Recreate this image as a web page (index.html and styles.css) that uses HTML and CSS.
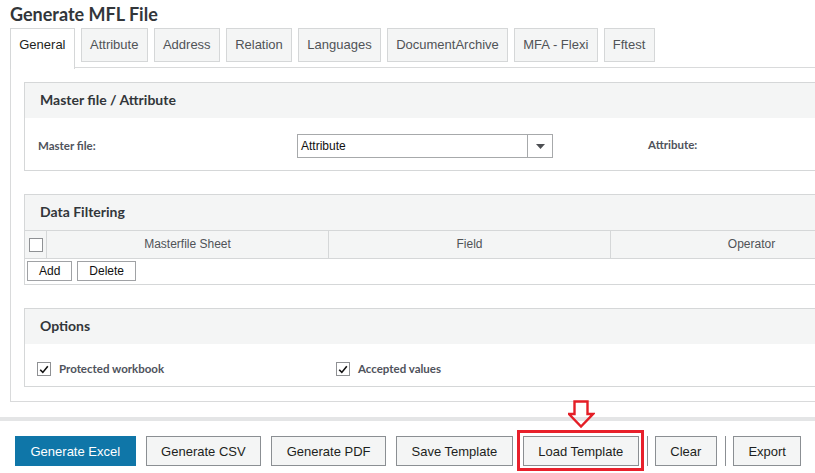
FILE: index.html
```html
<!DOCTYPE html>
<html>
<head>
<meta charset="utf-8">
<title>Generate MFL File</title>
<link rel="stylesheet" href="styles.css">
</head>
<body>
<div class="main">
  <h1 class="title">Generate MFL File</h1>
  <div class="tabs">
    <div class="tab tab-active">General</div>
    <div class="tab">Attribute</div>
    <div class="tab">Address</div>
    <div class="tab">Relation</div>
    <div class="tab">Languages</div>
    <div class="tab">DocumentArchive</div>
    <div class="tab">MFA - Flexi</div>
    <div class="tab">Fftest</div>
  </div>
  <div class="panel">
    <section class="box">
      <div class="box-head">Master file / Attribute</div>
      <div class="box-body master-row">
        <span class="lbl lbl-master">Master file:</span>
        <div class="select">
          <span class="select-val">Attribute</span>
          <span class="select-btn"><svg width="9" height="5" viewBox="0 0 9 5"><polygon points="0,0 9,0 4.5,5" fill="#4d4f53"/></svg></span>
        </div>
        <span class="lbl lbl-attr">Attribute:</span>
      </div>
    </section>

    <section class="box">
      <div class="box-head">Data Filtering</div>
      <div class="grid-head">
        <div class="cell-check"><span class="checkbox"></span></div>
        <div class="col">Masterfile Sheet</div>
        <div class="col">Field</div>
        <div class="col">Operator</div>
      </div>
      <div class="grid-tools">
        <button class="small-btn">Add</button>
        <button class="small-btn">Delete</button>
      </div>
    </section>

    <section class="box">
      <div class="box-head">Options</div>
      <div class="box-body options-row">
        <label class="opt opt-first"><span class="checkbox checked"><svg width="10" height="9" viewBox="0 0 10 9"><polyline points="1.2,4.8 3.8,7.4 8.8,1.2" fill="none" stroke="#111" stroke-width="1.6"/></svg></span><span class="lbl">Protected workbook</span></label>
        <label class="opt"><span class="checkbox checked"><svg width="10" height="9" viewBox="0 0 10 9"><polyline points="1.2,4.8 3.8,7.4 8.8,1.2" fill="none" stroke="#111" stroke-width="1.6"/></svg></span><span class="lbl">Accepted values</span></label>
      </div>
    </section>
  </div>
</div>
<div class="divider"></div>
<div class="actions">
  <button class="btn btn-primary">Generate Excel</button>
  <button class="btn">Generate CSV</button>
  <button class="btn">Generate PDF</button>
  <button class="btn">Save Template</button>
  <div class="highlight-wrap">
    <button class="btn">Load Template</button>
    <span class="highlight-box"></span>
    <svg class="highlight-arrow" width="27" height="29" viewBox="0 0 27 29"><polygon points="6.5,1.5 19.5,1.5 19.5,14 25,14 13,26.5 1,14 6.5,14" fill="none" stroke="#e41e26" stroke-width="2.4"/></svg>
  </div>
  <span class="sep"></span>
  <button class="btn">Clear</button>
  <span class="sep"></span>
  <button class="btn">Export</button>
</div>
</body>
</html>
```

FILE: styles.css
```css
html, body {
  margin: 0;
  padding: 0;
  background: #ffffff;
  overflow: hidden;
  width: 815px;
  height: 473px;
}

body {
  font-family: "Liberation Sans", Arial, sans-serif;
  color: #32363a;
}

.main {
  padding-left: 10px;
}

.title {
  margin: 0;
  padding-top: 3px;
  height: 25px;
  font-family: Lato, "Liberation Sans", sans-serif;
  font-weight: 700;
  font-size: 18px;
  line-height: 22px;
  color: #32363a;
}

.tabs {
  display: flex;
  align-items: flex-start;
  gap: 6px;
  height: 40px;
  margin-bottom: -1px;
  position: relative;
  z-index: 1;
}

.tab {
  box-sizing: border-box;
  height: 34px;
  line-height: 32px;
  padding: 0 8.25px;
  border: 1px solid #d5d7d8;
  background: #f4f5f5;
  font-size: 13px;
  color: #505357;
  white-space: nowrap;
}

.tab-active {
  height: 41px;
  border-bottom: none;
  background: #ffffff;
  color: #1d1f21;
}

.panel {
  box-sizing: border-box;
  width: 1000px;
  border: 1px solid #d9dadb;
  border-right: none;
  padding: 14px 0 14px 13px;
  display: flex;
  flex-direction: column;
  gap: 23px;
}

.box {
  border: 1px solid #d5d7d8;
}

.box-head {
  height: 35px;
  line-height: 34px;
  padding-left: 15px;
  background: #f4f5f5;
  font-family: Lato, "Liberation Sans", sans-serif;
  font-weight: 700;
  font-size: 14px;
  color: #32363a;
}

.box-body {
  background: #fff;
}

.lbl {
  font-family: Lato, "Liberation Sans", sans-serif;
  font-weight: 700;
  font-size: 11.5px;
  color: #4f535c;
}

.master-row {
  box-sizing: border-box;
  height: 52px;
  padding: 16px 0 0 13px;
  display: flex;
  align-items: flex-start;
}

.lbl-master {
  width: 259px;
  line-height: 24px;
}

.select {
  box-sizing: border-box;
  width: 256px;
  height: 24px;
  border: 1px solid #a7a9ab;
  display: flex;
  background: #fff;
}

.select-val {
  flex: 1;
  padding-left: 3px;
  line-height: 23px;
  font-size: 12px;
  color: #111;
}

.select-btn {
  width: 24px;
  border-left: 1px solid #a7a9ab;
  display: flex;
  align-items: center;
  justify-content: center;
}

.lbl-attr {
  margin-left: 95px;
  line-height: 22px;
}

.grid-head {
  display: flex;
  height: 27px;
  border-top: 1px solid #d5d7d8;
  border-bottom: 1px solid #d5d7d8;
  background: #f4f5f5;
}

.cell-check {
  width: 21px;
  display: flex;
  align-items: center;
  justify-content: center;
  border-right: 1px solid #d5d7d8;
}

.col {
  box-sizing: border-box;
  width: 282px;
  line-height: 27px;
  text-align: center;
  font-size: 12px;
  color: #505357;
  border-right: 1px solid #d5d7d8;
}

.checkbox {
  box-sizing: border-box;
  width: 14px;
  height: 14px;
  border: 1px solid #8f9194;
  background: #fff;
  display: inline-flex;
  align-items: center;
  justify-content: center;
}

.grid-tools {
  height: 25px;
  box-sizing: border-box;
  padding: 2px 0 0 2px;
  display: flex;
  gap: 5px;
  align-items: flex-start;
}

.small-btn {
  box-sizing: border-box;
  height: 20px;
  padding: 0 11px;
  border: 1px solid #a0a2a5;
  background: #fff;
  font-family: "Liberation Sans", Arial, sans-serif;
  font-size: 12px;
  color: #111;
  line-height: 18px;
}

.options-row {
  box-sizing: border-box;
  height: 42px;
  padding: 18px 0 0 12px;
  display: flex;
  align-items: flex-start;
}

.opt {
  display: flex;
  align-items: center;
  gap: 8px;
  line-height: 14px;
}

.opt-first {
  width: 299px;
}

.divider {
  margin-top: 15px;
  height: 4px;
  background: #e4e5e6;
}

.actions {
  margin-top: 15px;
  padding-left: 15px;
  display: flex;
  align-items: center;
  gap: 10px;
}

.btn {
  box-sizing: border-box;
  height: 30px;
  padding: 0 14.5px;
  border: 1px solid #8b8f93;
  background: #f4f5f5;
  font-family: "Liberation Sans", Arial, sans-serif;
  font-size: 13px;
  color: #1d1f21;
  white-space: nowrap;
}

.btn-primary {
  background: #0f76a8;
  border-color: #0f76a8;
  color: #ffffff;
}

.highlight-wrap {
  position: relative;
  display: flex;
}

.highlight-box {
  position: absolute;
  left: -6px;
  top: -6px;
  right: -5px;
  bottom: -5px;
  border: 3px solid #e8202b;
}

.highlight-arrow {
  position: absolute;
  left: 45px;
  top: -36px;
}

.sep {
  width: 1px;
  height: 30px;
  background: #8b8f93;
  margin: 0 -3px 0 -2px;
}
```
